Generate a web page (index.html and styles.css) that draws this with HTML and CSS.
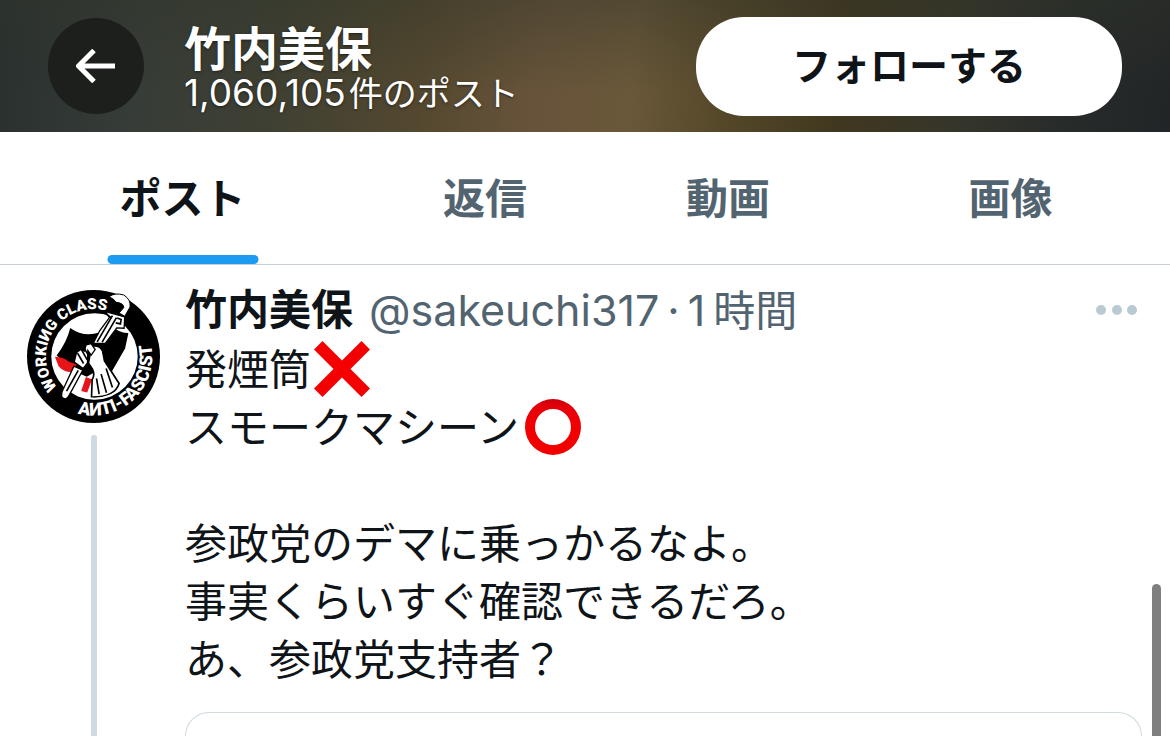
FILE: index.html
```html
<!DOCTYPE html>
<html lang="ja">
<head>
<meta charset="utf-8">
<meta name="viewport" content="width=device-width, initial-scale=1">
<title>竹内美保</title>
<link rel="stylesheet" href="styles.css">
</head>
<body>
<header class="profile-bar">
  <button class="back" type="button" aria-label="戻る">
    <svg class="back-icon" viewBox="0 0 40 34" aria-hidden="true"><path d="M18 1.500 2.500 17 18 32.500M3 17H39"/></svg>
  </button>
  <div class="identity">
    <h1 class="title">竹内美保</h1>
    <p class="count"><span class="number">1,060,105</span><span>件のポスト</span></p>
  </div>
  <button class="follow" type="button">フォローする</button>
</header>
<nav class="tabs">
  <a class="tab active" href="#posts">ポスト</a>
  <a class="tab" href="#replies">返信</a>
  <a class="tab" href="#videos">動画</a>
  <a class="tab" href="#images">画像</a>
</nav>
<main class="post">
  <div class="rail">
    <svg class="avatar" viewBox="35 29 400 400" role="img" aria-label="竹内美保">
      <defs>
        <path id="arc-top" d="M126 322A143 143 0 1 1 378 229"/>
        <path id="arc-bottom" d="M187 400A177 177 0 0 0 400 166"/>
        <clipPath id="disc"><circle cx="238" cy="229" r="124"/></clipPath>
      </defs>
      <circle cx="235" cy="229" r="200"/>
      <circle cx="238" cy="229" r="130" fill="#fff"/>
      <g clip-path="url(#disc)">
        <path d="M165 143Q205 172 252 157L290 137Q315 160 340 158L330 205 288 278 262 262 215 290 180 275 124 226Q155 185 165 143Z"/>
        <path fill="#e8141b" d="M119 230Q145 231 160 244L184 253 174 275Q147 278 130 258ZM212 291 231 298 216 337 198 333Z"/>
        <path fill="#fff" stroke="#000" stroke-width="5" d="M229 198Q252 193 262 211L268 242 312 310Q299 352 229 351L231 298Q240 285 232 267L220 249Z"/>
        <path fill="none" stroke="#000" stroke-width="5" d="M244 295 252 342M258 282 274 338M273 265 292 322"/>
      </g>
      <path fill="#fff" stroke="#000" stroke-width="4" d="M271 94 329 110 327 144 305 143 270 190 234 190 254 151 283 112ZM176 258 203 270 160 349Q151 363 139 350L140 336Z"/>
      <path fill="none" stroke="#000" stroke-width="5" d="M292 106 246 185M304 112 261 186M189 271 154 333M306 113 318 118 316 131 302 128M276 103 288 112"/>
      <path fill="#fff" stroke="#000" stroke-width="3" d="M282 49Q299 36 326 44 348 58 345 80L329 108 312 98 326 82Q326 68 303 66L295 57Z"/>
      <path fill="#fff" stroke="#000" stroke-width="4" d="M177 246 184 217 198 207 207 213 213 194 228 190 240 208 228 225 218 211 217 248 204 265Z"/>
      <path fill="none" stroke="#000" stroke-width="5" d="M187 219 205 250M198 207 216 239M207 204 219 225"/>
      <text class="ring-text"><textPath href="#arc-top">WORKIИG CLASS</textPath></text>
      <text class="ring-text lower"><textPath href="#arc-bottom">AИTI-FASCIST</textPath></text>
    </svg>
    <div class="thread"></div>
  </div>
  <article class="content">
    <div class="byline">
      <span class="name">竹内美保</span>
      <span class="meta"><span class="latin">@sakeuchi317</span><span class="latin">·</span><span class="latin">1</span><span>時間</span></span>
      <button class="more" type="button" aria-label="もっと見る">
        <svg class="more-icon" viewBox="0 0 42 12" aria-hidden="true"><circle cx="5" cy="6" r="5"/><circle cx="21" cy="6" r="5"/><circle cx="36" cy="6" r="5"/></svg>
      </button>
    </div>
    <p class="text">発煙筒<svg class="emoji" viewBox="0 0 56 56" role="img" aria-label="バツ"><path fill="#f50000" d="M8.500 0 28 19.500 47.500 0 56 8.500 36.500 28 56 47.500 47.500 56 28 36.500 8.500 56 0 47.500 19.500 28 0 8.500Z"/></svg><br>
スモークマシーン<svg class="emoji ring" viewBox="0 0 56 56" role="img" aria-label="マル"><defs><linearGradient id="ring" x2="0" y2="1"><stop stop-color="#c9000b"/><stop offset=".15" stop-color="#e6000a"/><stop offset=".5" stop-color="#f20000"/></linearGradient></defs><path fill="url(#ring)" fill-rule="evenodd" d="M28 0a28 28 0 1 0 0 56 28 28 0 0 0 0-56Zm0 10a18 18 0 1 1 0 36 18 18 0 0 1 0-36Z"/></svg><br>
<br>
参政党のデマに乗っかるなよ。<br>
事実くらいすぐ確認できるだろ。<br>
あ、参政党支持者？</p>
    <div class="quote"></div>
  </article>
</main>
<div class="scroll-thumb"></div>
</body>
</html>
```
FILE: styles.css
```css
* {
  box-sizing: border-box;
}

body {
  margin: 0;
  min-height: 100vh;
  display: flex;
  flex-direction: column;
  position: relative;
  background: #fff;
  color: #0f1419;
  font-family: Inter, "Noto Sans CJK JP", sans-serif;
}

h1,
p {
  margin: 0;
}

button {
  border: 0;
  padding: 0;
  font: inherit;
  cursor: pointer;
}

.profile-bar {
  display: flex;
  align-items: center;
  height: 132px;
  padding: 0 48px;
  background:
    linear-gradient(180deg, rgba(48, 52, 40, 0.4), rgba(48, 52, 40, 0) 70%),
    linear-gradient(96deg, #29302f 0%, #363c37 12%, #3f4033 24%, #53482f 36%, #67533a 46%, #6a583a 54%, #554829 62%, #40371f 72%, #35352a 82%, #272b2a 91%, #222527 100%);
}

.back {
  display: grid;
  place-items: center;
  width: 96px;
  height: 96px;
  border-radius: 50%;
  background: #1c1f1b;
}

.back-icon {
  width: 40px;
  height: 34px;
  fill: none;
  stroke: #fff;
  stroke-width: 5;
}

.identity {
  flex: 1;
  padding: 4px 0 0 40px;
  color: #fff;
  text-shadow: 0 1px 3px rgba(0, 0, 0, 0.5);
}

.title {
  font-size: 47px;
  line-height: 50px;
  font-weight: 700;
}

.count {
  display: flex;
  align-items: baseline;
  gap: 3px;
  font-size: 34px;
  line-height: 38px;
}

.number {
  font-size: 37px;
}

.follow {
  width: 426px;
  height: 99px;
  padding-bottom: 6px;
  border-radius: 48px;
  background: #fff;
  color: #0f1419;
  font-size: 39px;
  font-weight: 700;
}

.tabs {
  display: grid;
  grid-template-columns: 365fr 240fr 246fr 319fr;
  height: 133px;
  border-bottom: 1px solid #c3d0d6;
}

.tab {
  display: grid;
  place-items: center;
  position: relative;
  padding-bottom: 6px;
  color: #536471;
  font-size: 42px;
  font-weight: 700;
  text-decoration: none;
}

.tab.active {
  color: #0f1419;
}

.tab.active::after {
  content: "";
  position: absolute;
  bottom: 0;
  left: 50%;
  width: 151px;
  height: 9px;
  border-radius: 5px;
  background: #1d9bf0;
  transform: translateX(-50%);
}

.post {
  flex: 1;
  display: flex;
  gap: 25px;
  padding: 20px 28px 0 27px;
}

.rail {
  display: flex;
  flex-direction: column;
  align-items: center;
  gap: 12px;
  padding-top: 5px;
}

.avatar {
  width: 133px;
  height: 133px;
}

.ring-text {
  fill: #fff;
  font-family: Roboto, "Liberation Sans", sans-serif;
  font-size: 46px;
  font-weight: 900;
}

.ring-text.lower {
  font-size: 54px;
}

.thread {
  flex: 1;
  width: 6px;
  border-radius: 3px 3px 0 0;
  background: #cfd9e2;
}

.content {
  flex: 1;
  display: flex;
  flex-direction: column;
}

.byline {
  display: flex;
  align-items: center;
  gap: 16px;
  height: 50px;
  font-size: 42px;
  line-height: 50px;
  white-space: nowrap;
}

.name {
  font-weight: 700;
}

.meta {
  flex: 1;
  display: flex;
  align-items: baseline;
  gap: 8px;
  color: #536471;
}

.latin {
  font-size: 43px;
}

.more {
  display: grid;
  margin-right: 4px;
  background: none;
}

.more-icon {
  width: 42px;
  height: 12px;
  fill: #b9cad3;
}

.text {
  padding-top: 6px;
  font-size: 42px;
  line-height: 58px;
}

.emoji {
  width: 56px;
  height: 56px;
  margin-left: 3px;
  vertical-align: top;
}

.emoji.ring {
  margin-left: 6px;
}

.quote {
  flex: 1;
  min-height: 24px;
  margin-top: 23px;
  border: 1px solid #cfd9de;
  border-bottom: 0;
  border-radius: 40px 40px 0 0;
}

.scroll-thumb {
  position: absolute;
  top: 584px;
  right: 9px;
  bottom: 0;
  width: 9px;
  border-radius: 5px 5px 0 0;
  background: #7f7f7f;
}
```
